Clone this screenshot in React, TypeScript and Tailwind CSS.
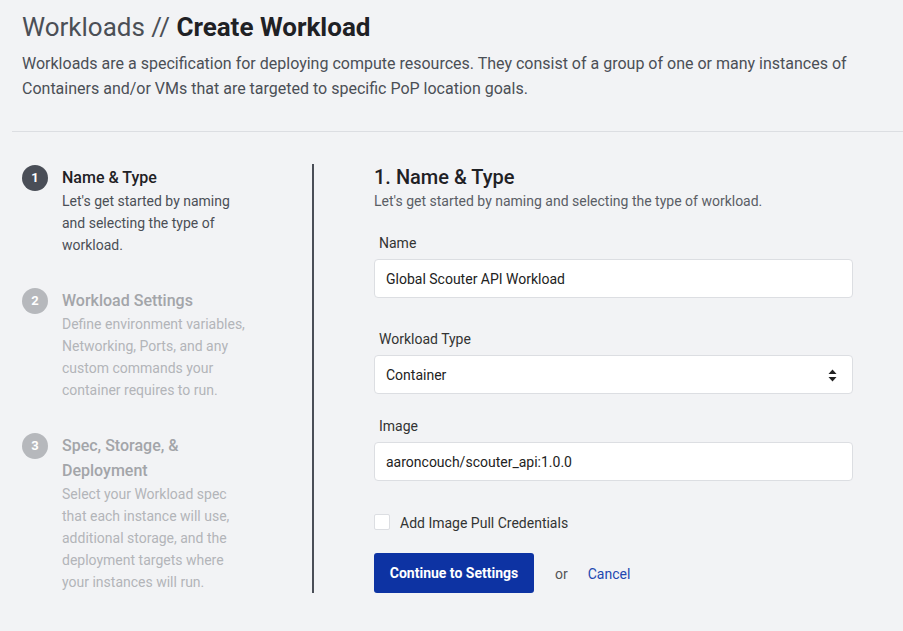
import { useState } from "react";

const steps = [
    {
        num: 1,
        title: "Name & Type",
        desc: "Let's get started by naming and selecting the type of workload.",
        active: true,
    },
    {
        num: 2,
        title: "Workload Settings",
        desc: "Define environment variables, Networking, Ports, and any custom commands your container requires to run.",
        active: false,
    },
    {
        num: 3,
        title: "Spec, Storage, & Deployment",
        desc: "Select your Workload spec that each instance will use, additional storage, and the deployment targets where your instances will run.",
        active: false,
    },
];

const SelectArrows = () => (
    <svg width="9" height="13" viewBox="0 0 9 13" className="text-[#222]">
        <path d="M4.5 0.5 L8.5 5 H0.5 Z" fill="currentColor" />
        <path d="M4.5 12.5 L8.5 8 H0.5 Z" fill="currentColor" />
    </svg>
);

const App = () => {
    const [name, setName] = useState("Global Scouter API Workload");
    const [image, setImage] = useState("aaroncouch/scouter_api:1.0.0");
    const [pull, setPull] = useState(false);

    return (
        <div className="min-h-screen w-full bg-[#f2f3f5] pl-[12px] font-['Roboto',sans-serif]">
            {/* Header */}
            <div className="pl-[10px] pt-[11px]">
                <h1 className="text-[26px] leading-[32px] text-[#4b4f56]">
                    Workloads // <span className="font-bold text-[#1f2125]">Create Workload</span>
                </h1>
                <p className="mt-[8px] text-[16px] leading-[25px] text-[#4b4f56]">
                    Workloads are a specification for deploying compute resources. They consist of a group of one or many instances of
                    Containers and/or VMs that are targeted to specific PoP location goals.
                </p>
            </div>
            <div className="mt-[30px] border-t border-[#dcdee2]" />

            {/* Body */}
            <div className="flex pl-[10px] pt-[33px]">
                {/* Stepper */}
                <div className="flex w-[290px] flex-col gap-[32px]">
                    {steps.map((s) => (
                        <div key={s.num} className="flex gap-[14px]">
                            <div
                                className={
                                    s.active
                                        ? "mt-[-0.5px] flex h-[26px] w-[26px] shrink-0 items-center justify-center rounded-full bg-[#4a4e57] text-[13px] font-bold text-white"
                                        : "mt-[-0.5px] flex h-[26px] w-[26px] shrink-0 items-center justify-center rounded-full bg-[#b6b8bc] text-[13px] font-bold text-white"
                                }
                            >
                                {s.num}
                            </div>
                            <div className="w-[190px]">
                                <div
                                    className={
                                        s.active
                                            ? "text-[16px] font-medium leading-[25px] text-[#1f2125]"
                                            : "text-[16px] font-medium leading-[25px] text-[#a3a5a9]"
                                    }
                                >
                                    {s.title}
                                </div>
                                <div
                                    className={
                                        s.active
                                            ? "text-[14px] leading-[22px] text-[#4b4f56]"
                                            : "text-[14px] leading-[22px] text-[#b3b5b9]"
                                    }
                                >
                                    {s.desc}
                                </div>
                            </div>
                        </div>
                    ))}
                </div>

                {/* Divider */}
                <div className="mt-[-1px] w-[2px] self-stretch bg-[#4a4e57]" />

                {/* Form */}
                <div className="ml-[60px] w-[479px]">
                    <h2 className="text-[20px] font-medium leading-[25px] text-[#1f2125]">1. Name &amp; Type</h2>
                    <p className="mt-[0.5px] text-[14px] leading-[20px] text-[#5a5e66]">
                        Let's get started by naming and selecting the type of workload.
                    </p>

                    <label className="mt-[22px] block pl-[5px] text-[14px] leading-[20px] text-[#333]">Name</label>
                    <input
                        value={name}
                        onChange={(e) => setName(e.target.value)}
                        className="mt-[6px] block h-[39px] w-full rounded-[4px] border border-[#dcdee2] bg-white px-[11px] pt-[2px] text-[14px] text-[#222] outline-none"
                    />

                    <label className="mt-[31px] block pl-[5px] text-[14px] leading-[20px] text-[#333]">Workload Type</label>
                    <div className="mt-[6px] flex h-[39px] w-full items-center justify-between rounded-[4px] border border-[#dcdee2] bg-white pl-[11px] pr-[15px] pt-[2px] text-[14px] text-[#222]">
                        <span>Container</span>
                        <SelectArrows />
                    </div>

                    <label className="mt-[22px] block pl-[5px] text-[14px] leading-[20px] text-[#333]">Image</label>
                    <input
                        value={image}
                        onChange={(e) => setImage(e.target.value)}
                        className="mt-[6px] block h-[39px] w-full rounded-[4px] border border-[#dcdee2] bg-white px-[11px] pt-[2px] text-[14px] text-[#222] outline-none"
                    />

                    <label className="mt-[32px] flex items-center gap-[10px] text-[14px] leading-[16px] text-[#333]">
                        <span
                            onClick={() => setPull((p) => !p)}
                            className="h-[16px] w-[16px] rounded-[2px] border border-[#dcdee2] bg-white"
                        >
                            {pull && <span className="block h-full w-full bg-[#0d34a4]" />}
                        </span>
                        <span className="pt-[2px]">Add Image Pull Credentials</span>
                    </label>

                    <div className="mt-[22px] flex items-center">
                        <button className="h-[40px] w-[160px] rounded-[3px] bg-[#0d33a3] pt-[2px] text-[14px] font-bold text-white">
                            Continue to Settings
                        </button>
                        <span className="ml-[21px] pt-[4px] text-[14px] text-[#555]">or</span>
                        <a className="ml-[20px] cursor-pointer pt-[4px] text-[14px] text-[#2348b0]">Cancel</a>
                    </div>
                </div>
            </div>
        </div>
    );
};

export default App;
